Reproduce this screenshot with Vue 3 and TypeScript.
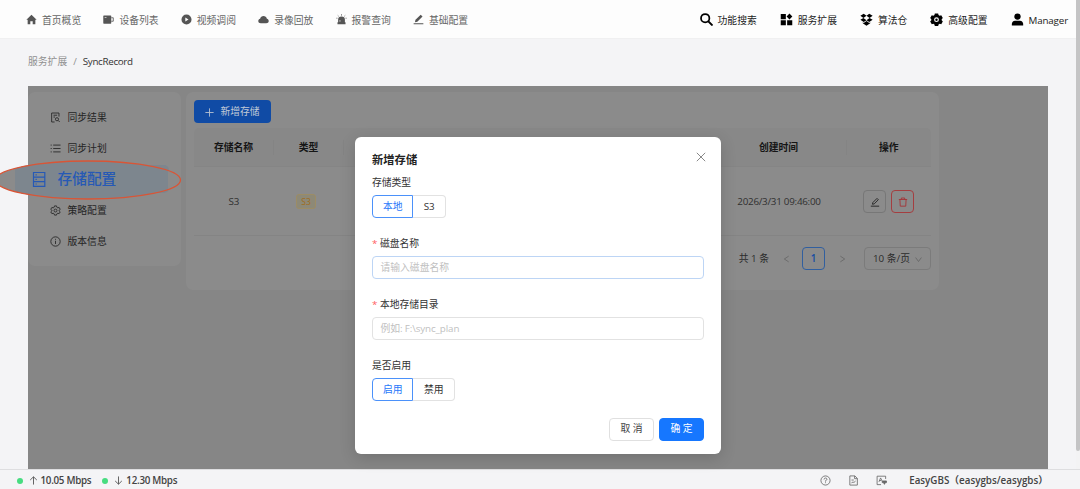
<script setup lang="ts">
interface NavItem { label: string; icon: string }

const nav: NavItem[] = [
  { label: '首页概览', icon: 'home' },
  { label: '设备列表', icon: 'device' },
  { label: '视频调阅', icon: 'play' },
  { label: '录像回放', icon: 'cloud' },
  { label: '报警查询', icon: 'alarm' },
  { label: '基础配置', icon: 'edit' },
]
const menu: NavItem[] = [
  { label: '同步结果', icon: 'result' },
  { label: '同步计划', icon: 'list' },
  { label: '', icon: '' },
  { label: '策略配置', icon: 'gear' },
  { label: '版本信息', icon: 'info' },
]
</script>

<template>
  <div class="page">
    <header class="topbar">
      <nav class="main-nav">
        <span v-for="item in nav" :key="item.label" class="nav-item">
          <svg class="nav-icon" viewBox="0 0 12 12">
            <path v-if="item.icon === 'home'" d="M6 .8 11.6 6.300H10.200v4.900H7.300V7.800H4.700v3.400H1.800V6.300H.4Z" />
            <g v-else-if="item.icon === 'device'">
              <path d="M1 1.500h7.300q.7 0 .7.7v7.600q0 .7-.7.7H1q-.7 0-.7-.7V2.200q0-.7.7-.7Z" />
              <path d="M9 4.100h2.200v3.800H9" fill="none" stroke="#555" stroke-width=".9" />
              <path d="M1.800 3.800h2" stroke="#fff" stroke-width=".7" />
            </g>
            <path v-else-if="item.icon === 'play'" fill-rule="evenodd" d="M6 .5a5.500 5.500 0 1 0 0 11A5.500 5.500 0 0 0 6 .5ZM4.700 3.700v4.600L8.200 6Z" />
            <path v-else-if="item.icon === 'cloud'" d="M3 10C1.500 10 .3 9 .3 7.500c0-1.300.9-2.200 2-2.400C2.800 3.300 4.200 2.200 6 2.200s3.200 1.100 3.700 2.900c1.100.2 2 1.100 2 2.400C11.700 9 10.500 10 9 10Z" />
            <g v-else-if="item.icon === 'alarm'">
              <path d="M2.300 9V6.200a3.700 3.500 0 0 1 7.400 0V9h.7v2.200H1.600V9Z" />
              <path d="M6 .2v1.600M1.900 1.500l1 1M10.100 1.500l-1 1M.4 4.600h1.200M10.400 4.600h1.200" fill="none" stroke="#555" stroke-width=".8" />
              <path d="M4.300 8.500V6.600" stroke="#fff" stroke-width=".7" />
            </g>
            <path v-else d="M.7 10h10.600v1.100H.7ZM2.100 9l.6-2.600L8.400.7l2 2-5.700 5.700Z" />
          </svg>
          {{ item.label }}
        </span>
      </nav>
      <div class="tools">
        <span class="tool t1">
          <svg viewBox="0 0 14 14"><circle cx="5.600" cy="5.600" r="4.500" fill="none" stroke="#000" stroke-width="1.900" /><path d="m9 9 3.800 3.800" stroke="#000" stroke-width="2.200" stroke-linecap="round" /></svg>功能搜索
        </span>
        <span class="tool t2">
          <svg viewBox="0 0 14 14"><path d="M.8 1.200h5.500v5.500H.8ZM.8 7.800h5.500v5.500H.8ZM7.700 7.800h5.500v5.500H7.700ZM10.200.6l3.100 3.200-3.100 3.200-3.100-3.200Z" /></svg>服务扩展
        </span>
        <span class="tool t3">
          <svg viewBox="0 0 14 14"><path d="M4 .8 7 3 3.700 5.500.4 3ZM10 .8 13.600 3l-3.300 2.500L7 3ZM.4 7.300l3.300-1.800L7 7.900 4 9.700ZM13.600 7.300l-3.300-1.800L7 7.900l3 1.800ZM3 10l1 .7 3-2 3 2 1-.7v1l-4 2.600-4-2.600Z" /></svg>算法仓
        </span>
        <span class="tool t4">
          <svg viewBox="0 0 14 14"><path fill-rule="evenodd" d="M5.200.5h3.600l.4 1.700 1.200.7 1.700-.5 1.700 3-1.200 1.200v1.300l1.200 1.200-1.700 3-1.700-.5-1.200.7-.4 1.600H5.200l-.4-1.600-1.200-.7-1.700.5-1.700-3 1.200-1.200V6.600L.2 5.400l1.700-3 1.700.5 1.200-.7ZM7 4.600a2.600 2.600 0 1 0 0 5.200 2.600 2.600 0 0 0 0-5.200Z" /><circle cx="7" cy="7.200" r="1.300" /></svg>高级配置
        </span>
        <span class="tool t5">
          <svg viewBox="0 0 14 14"><circle cx="7" cy="3.900" r="3.400" /><path d="M.9 13.400v-1.500Q1.100 8.600 4.300 8.300h5.400q3.200.3 3.400 3.600v1.500Z" /></svg><span class="user">Manager</span>
        </span>
      </div>
    </header>

    <div class="crumb"><span>服务扩展</span><i>/</i><b>SyncRecord</b></div>

    <main class="workspace">
      <aside class="side">
        <div v-for="(m, i) in menu" :key="i" class="side-item" :class="{ active: !m.label }">
          <template v-if="m.label">
            <svg viewBox="0 0 12 12" class="line-icon">
              <g v-if="m.icon === 'result'"><path d="M5 10.900H1.800V1.100h8V5M3.800 3.500h4M3.800 5.500h1.700" /><circle cx="7.600" cy="7.900" r="1.700" /><path d="m8.900 9.200 1.700 1.700" /></g>
              <path v-else-if="m.icon === 'list'" d="M3.500 2.300h8M3.500 6h8M3.500 9.700h8M.7 2.300h1.200M.7 6h1.200M.7 9.700h1.200" />
              <g v-else-if="m.icon === 'gear'"><path d="M4.900 1h2.200l.4 1.500 1 .6 1.500-.4 1.100 1.900L10 5.700v.8l1.100 1L10 9.400 8.500 9l-1 .6L7.100 11H4.900l-.4-1.400-1-.6-1.500.4L.9 7.500 2 6.500v-.8L.9 4.600 2 2.700l1.500.4 1-.6Z" /><circle cx="6" cy="6.050" r="1.600" /></g>
              <g v-else><circle cx="6" cy="6" r="5.100" /><path d="M6 5.200v3.500M6 3.100v1" /></g>
            </svg>
            <span>{{ m.label }}</span>
          </template>
        </div>
      </aside>

      <section class="panel">
        <button class="add"><svg viewBox="0 0 10 10"><path d="M5 .4v9.200M.4 5h9.200" /></svg>新增存储</button>
        <div class="table">
          <div class="row head">
            <span>存储名称</span><span>类型</span><span></span><span>创建时间</span><span>操作</span>
          </div>
          <div class="row body">
            <span class="latin">S3</span><span><em class="tag">S3</em></span><span></span><span class="date">2026/3/31 09:46:00</span>
            <span class="acts">
              <button class="act"><svg viewBox="0 0 12 12"><path d="M1 11h10M3 8.700l.4-2L8.400 1.700 10 3.300 5 8.300Z" /></svg></button>
              <button class="act del"><svg viewBox="0 0 12 12"><path d="M1 3h10M4 3V1.200h4V3M2.300 3l.4 8h6.600l.4-8" /></svg></button>
            </span>
          </div>
        </div>
        <div class="pager">
          <span class="total">共 1 条</span>
          <svg class="chev c1" viewBox="0 0 8 8"><path d="M6.500.7 1.500 4l5 3.300" /></svg>
          <span class="num">1</span>
          <svg class="chev c2" viewBox="0 0 8 8"><path d="M1.500.7 6.500 4l-5 3.300" /></svg>
          <span class="size">10 条/页<svg viewBox="0 0 8 8"><path d="M.7 1.800 4 6.300l3.300-4.500" /></svg></span>
        </div>
      </section>
    </main>

    <footer class="status">
      <i class="dot"></i>
      <svg class="arrow" viewBox="0 0 10 10"><path d="M5 9.500V1M1.300 4.500 5 .9l3.700 3.600" /></svg>
      <span class="rate">10.05 Mbps</span>
      <i class="dot second"></i>
      <svg class="arrow" viewBox="0 0 10 10"><path d="M5 .5V9M1.300 5.500 5 9.100l3.700-3.600" /></svg>
      <span class="rate">12.30 Mbps</span>
      <div class="links">
        <svg viewBox="0 0 12 12"><circle cx="6" cy="6" r="5" /><path d="M4.400 4.900Q4.500 3.300 6 3.300t1.600 1.400Q7.500 5.700 6 6.200v1M6 8v.9" /></svg>
        <svg viewBox="0 0 12 12"><path d="M2 1h5.500L10.200 3.700V11H2ZM7.200 1v3h3M3.800 5.500h2.500M3.800 8.500l1.700-.8 1 .4 1.800-1.500" /></svg>
        <svg viewBox="0 0 12 12"><path d="M5.500 10.500H1.200V1.300h9.300v3M3.200 7.500 5 3.200l1.500 3M3.900 6h2" /><path d="M6.800 6.500h4.600v1.800H6.800ZM8.400 8.500h1.600L9.200 10.200Z" fill="#666" /></svg>
      </div>
      <span class="brand">EasyGBS（easygbs/easygbs）</span>
    </footer>

    <div class="callout">
      <svg viewBox="0 0 184 40">
        <defs><clipPath id="lens"><ellipse cx="88" cy="20" rx="92.500" ry="19" /></clipPath></defs>
        <g clip-path="url(#lens)">
          <rect width="184" height="40" fill="#8b8b8b" />
          <rect x="15" width="153" height="40" fill="#7d868e" />
        </g>
        <ellipse cx="88" cy="20" rx="92.500" ry="19" fill="none" stroke="#d95536" stroke-width="1.300" />
        <path d="M33.500 12.500h11.300v13.800H33.500ZM33.500 17.100h11.300M33.500 21.700h11.300M35.500 14.800h1.300M35.500 19.400h1.300M35.500 24h1.300" fill="none" stroke="#2659b5" stroke-width="1.200" />
      </svg>
      <span>存储配置</span>
    </div>

    <section class="dialog">
      <svg class="close" viewBox="0 0 10 10"><path d="m.8.8 8.400 8.400M9.200.8.8 9.200" /></svg>
      <h2>新增存储</h2>
      <label class="lab type">存储类型</label>
      <div class="seg"><span class="on">本地</span><span class="s3">S3</span></div>
      <label class="lab gap"><i>*</i>磁盘名称</label>
      <div class="field focus">请输入磁盘名称</div>
      <label class="lab gap"><i>*</i>本地存储目录</label>
      <div class="field">例如: F:\sync_plan</div>
      <label class="lab gap">是否启用</label>
      <div class="seg"><span class="on">启用</span><span>禁用</span></div>
      <div class="actions"><button>取 消</button><button class="ok">确 定</button></div>
    </section>

    <div class="scroll"><i></i></div>
  </div>
</template>

<style>
body { overflow: hidden; }
</style>

<style scoped>
* { box-sizing: border-box; }
.page { position: relative; width: 1080px; height: 489px; display: flex; flex-direction: column; overflow: hidden; background: #f4f4f6; font-family: "Open Sans", "Noto Sans CJK SC", sans-serif; font-size: 9.8px; line-height: 14px; color: #333; }
button { font: inherit; padding: 0; }
svg { display: block; flex: none; }
i, em { font-style: normal; }
.topbar { height: 39px; flex: none; display: flex; justify-content: space-between; background: #fdfdfd; border-bottom: 1px solid #f0f0f1; padding: 3px 12px 0 26px; }
.main-nav { display: flex; align-items: center; }
.nav-item { width: 77.400px; display: flex; align-items: center; gap: 5px; color: #666; white-space: nowrap; }
.nav-icon { width: 11px; height: 11px; fill: #555; margin-top: -2px; }
.tools { display: flex; align-items: center; color: #222; }
.tool { display: flex; align-items: center; gap: 5px; white-space: nowrap; }
.tool svg { width: 13px; height: 13px; margin-top: -3px; }
.t1 { margin-right: .5px; }
.user { letter-spacing: -.15px; }
.t2 { margin-left: 22.500px; } .t3 { margin-left: 23px; } .t4 { margin-left: 23px; } .t5 { margin-left: 23px; }
.crumb { height: 47px; flex: none; padding: 16px 0 0 28px; display: flex; color: #909090; }
.crumb i { margin: 0 6px; }
.crumb b { font-weight: 400; color: #333; letter-spacing: -.32px; }
.workspace { height: 383px; flex: none; margin: 0 32px 0 28px; background: #868686; padding-top: 6px; display: flex; align-items: flex-start; gap: 5px; }
.side { width: 152.500px; height: 174px; border-radius: 7px; background: #8b8b8b; padding: 10px 8px 0 0; }
.side-item { height: 31px; padding-left: 22px; display: flex; align-items: center; gap: 6.500px; color: #252525; }
.side-item.active { height: 28px; margin: 1px 4px 2px 0; border-radius: 0 5px 5px 0; background: #7d868e; }
.line-icon { width: 11px; height: 11px; fill: none; stroke: #2b2b2b; stroke-width: 1; }
.panel { width: 753.500px; height: 198px; border-radius: 7px; background: #8b8b8b; padding: 8px 8.500px 0; }
.add { width: 77px; height: 23px; border: 0; border-radius: 4px; background: #104ba5; color: #c0c9d6; display: flex; align-items: center; justify-content: center; gap: 6px; padding-top: 1px; }
.add svg { width: 9px; height: 9px; stroke: #b6c1d0; stroke-width: 1; }
.table { margin-top: 5px; }
.row { display: grid; grid-template-columns: 80px 70px 367px 136px 83.500px; align-items: center; text-align: center; }
.head { height: 39px; padding-top: 1px; background: #888; border-bottom: 1px solid #858585; border-radius: 5px 5px 0 0; color: #151515; font-weight: 700; }
.head span { height: 15px; line-height: 16px; border-right: 1px solid #848484; }
.head span:last-child { border: 0; }
.body { height: 69px; border-bottom: 1px solid #848484; color: #303030; padding-top: 1px; }
.tag { display: inline-block; width: 20px; height: 15px; line-height: 13px; border: 1px solid #9c8c65; border-radius: 3px; background: #8d8977; color: #a06c20; font-size: 8.500px; margin-right: 6px; }
.date { letter-spacing: -.24px; }
.acts { display: flex; justify-content: center; gap: 5px; }
.act { width: 23px; height: 23px; border: 1px solid #777; border-radius: 4px; background: transparent; display: flex; align-items: center; justify-content: center; }
.act svg { width: 10px; height: 10px; fill: none; stroke: #222; stroke-width: 1.100; }
.act.del { border-color: #a43e40; }
.act.del svg { stroke: #a43438; }
.pager { height: 23px; margin-top: 11px; display: flex; align-items: center; justify-content: flex-end; color: #2c2c2c; }
.chev { width: 7px; height: 8px; fill: none; stroke: #646464; stroke-width: .9; }
.c1 { margin: 0 12px 0 14px; } .c2 { margin: 0 18px 0 14px; }
.num { width: 23px; height: 23px; line-height: 22px; text-align: center; border: 1px solid #315f9f; border-radius: 4px; color: #164da3; font-weight: 600; }
.size { width: 66.500px; height: 23px; border: 1px solid #7b7b7b; border-radius: 4px; display: flex; align-items: center; justify-content: space-between; padding: 1px 8px 0; }
.size svg { width: 7px; height: 7px; fill: none; stroke: #626262; stroke-width: .9; }
.status { flex: 1; border-top: 1px solid #dedee0; display: flex; align-items: center; padding: 2px 32px 0 16.500px; color: #444; font-weight: 600; }
.dot { width: 6px; height: 6px; border-radius: 50%; background: #47dc80; margin-right: 6px; }
.second { margin-left: 11px; }
.arrow { width: 9px; height: 9px; fill: none; stroke: #555; stroke-width: 1; margin-right: 3px; }
.rate { font-size: 9.800px; letter-spacing: -.28px; }
.links { margin-left: auto; display: flex; gap: 17px; margin-right: 22.500px; }
.links svg { width: 11px; height: 11px; fill: none; stroke: #666; stroke-width: .9; }
.brand { white-space: nowrap; }
.callout { position: absolute; left: 0; top: 159.500px; width: 184px; height: 40px; }
.callout svg { width: 184px; height: 40px; }
.callout span { position: absolute; left: 57.500px; top: 8px; font-size: 14.700px; line-height: 20px; font-weight: 500; color: #2659b5; }
.dialog { position: absolute; left: 355.400px; top: 137.300px; width: 365.600px; height: 316.400px; border-radius: 6px; background: #fff; padding: 14.700px 17px 0 16.600px; box-shadow: 0 4px 16px rgba(0, 0, 0, .16); }
.close { position: absolute; right: 14.500px; top: 14.700px; width: 10px; height: 10px; stroke: #888; stroke-width: 1; }
h2 { margin: 0; font-size: 11.300px; line-height: 16px; font-weight: 700; color: #222; }
.lab { display: block; height: 14px; color: #333; }
.lab i { color: #ff5c5f; margin-right: 2.500px; }
.type { margin-top: 8px; }
.gap { margin-top: 19px; }
.seg { display: flex; height: 23px; margin-top: 5px; }
.seg span { width: 41.500px; line-height: 22px; text-align: center; border: 1px solid #e2e2e2; border-left: 0; border-radius: 0 4px 4px 0; }
.seg .s3 { width: 32.500px; }
.seg .on { border: 1px solid #4b91fa; border-radius: 4px 0 0 4px; color: #2878fa; }
.field { height: 23px; line-height: 21px; margin-top: 5px; border: 1px solid #e2e2e2; border-radius: 4px; padding-left: 7.500px; color: #bfbfbf; width: 332px; letter-spacing: -.1px; }
.focus { border-color: #bdd5f5; letter-spacing: 0; }
.actions { display: flex; justify-content: flex-end; gap: 5px; margin-top: 17px; }
.actions button { width: 45px; height: 23px; border: 1px solid #e0e0e0; border-radius: 4px; background: #fff; color: #444; }
.actions .ok { background: #1677ff; border-color: #1677ff; color: #fff; }
.scroll { position: absolute; right: 0; top: 0; width: 4px; height: 469px; background: #f3f3f4; }
.scroll i { display: block; height: 451px; background: #c4c4c5; border-radius: 0 0 2px 2px; }
</style>
